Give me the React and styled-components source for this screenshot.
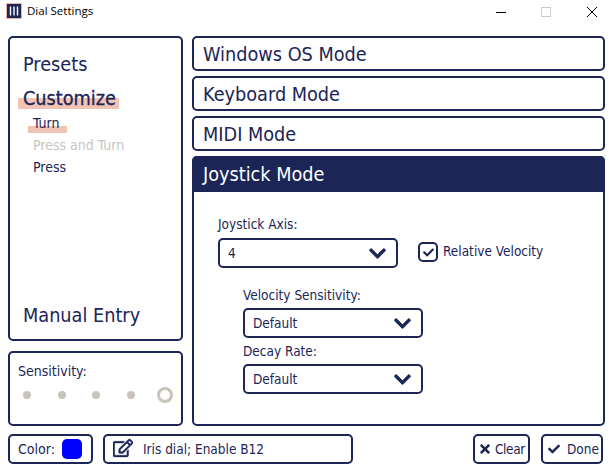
import styled, { createGlobalStyle } from "styled-components";
import { FaCheck, FaChevronDown, FaTimes, FaRegEdit } from "react-icons/fa";

const navy = "#1b2556";

const GlobalStyle = createGlobalStyle`
  * {
    margin: 0;
    padding: 0;
    box-sizing: border-box;
  }
  body {
    background: #fff;
    font-family: "DejaVu Sans Condensed", "DejaVu Sans", sans-serif;
    color: ${navy};
    overflow: hidden;
  }
`;

const Page = styled.div`
  width: 609px;
  height: 472px;
  display: flex;
  flex-direction: column;
`;

const TitleBar = styled.div`
  height: 36px;
  display: flex;
  align-items: flex-start;
  padding: 2px 0 0 6px;
  color: #000;
  font-family: "Open Sans", sans-serif;
  font-size: 11.5px;
`;

const AppIcon = styled.svg`
  width: 16px;
  height: 16px;
  margin-top: 1px;
  flex: none;
`;

const TitleText = styled.span`
  margin-left: 5px;
  line-height: 18px;
`;

const WinButtons = styled.div`
  margin-left: auto;
  display: flex;
  align-items: center;
  height: 16px;
  margin-top: 2px;
`;

const WinIcon = styled.svg`
  width: 46px;
  height: 12px;
  display: block;
`;

const Main = styled.div`
  height: 390px;
  margin-left: 8px;
  width: 597px;
  display: grid;
  grid-template-columns: 175px 413px;
  column-gap: 9px;
`;

const Panel = styled.div`
  border: 2px solid ${navy};
  border-radius: 5px;
`;

const LeftColumn = styled.div`
  display: flex;
  flex-direction: column;
  gap: 10px;
`;

const NavPanel = styled(Panel)`
  height: 305px;
  padding: 13px 0 0 13px;
  display: flex;
  flex-direction: column;
`;

const NavItem = styled.div`
  font-size: 19.7px;
  line-height: 27px;
  margin-bottom: 7px;
`;

const CustomizeMark = styled.span`
  display: inline-block;
  padding: 0 3px 0 5px;
  margin-left: -5px;
  height: 24px;
  line-height: 20px;
  -webkit-text-stroke: 0.3px ${navy};
  background: linear-gradient(transparent 37%, #f0c3b4 37%, #f0c3b4 83%, transparent 83%);
`;

const SubList = styled.div`
  margin-top: -8px;
`;

const SubItem = styled.div`
  font-size: 14px;
  line-height: 22px;
  padding-left: 10px;
  color: ${(p) => (p.$muted ? "#c9c5c0" : navy)};
`;

const TurnMark = styled.span`
  display: inline-block;
  padding: 0 8px 0 5px;
  margin-left: -5px;
  height: 22px;
  background: linear-gradient(transparent 64%, #f0c3b4 64%, #f0c3b4 96%, transparent 96%);
`;

const ManualEntry = styled(NavItem)`
  margin-top: auto;
  margin-bottom: 10px;
`;

const SensitivityPanel = styled(Panel)`
  height: 75px;
  padding: 9px 8px;
`;

const SmallLabel = styled.div`
  font-size: 13.5px;
  line-height: 18px;
`;

const SensitivityLabel = styled(SmallLabel)`
  font-size: 14px;
`;

const Dots = styled.div`
  margin-top: 7px;
  display: flex;
  align-items: center;
  gap: 26.5px;
  padding-left: 5px;
`;

const Dot = styled.span`
  width: 8px;
  height: 8px;
  border-radius: 50%;
  background: #c8c3bb;
`;

const DotActive = styled.span`
  width: 16px;
  height: 16px;
  margin-left: -4px;
  border-radius: 50%;
  border: 3px solid #c8c3bb;
`;

const RightColumn = styled.div`
  display: flex;
  flex-direction: column;
  gap: 5px;
`;

const ModeRow = styled(Panel)`
  height: 35px;
  padding-left: 9px;
  font-size: 19.7px;
  line-height: 33px;
`;

const ModePanel = styled(Panel)`
  height: 270px;
  display: flex;
  flex-direction: column;
`;

const ModeHeader = styled.div`
  height: 36px;
  background: ${navy};
  color: #fff;
  padding-left: 11px;
  font-size: 19.7px;
  line-height: 37px;
  margin: -2px -2px 0;
  border-radius: 5px 5px 0 0;
`;

const ModeBody = styled.div`
  padding: 23px 0 0 24px;
`;

const AxisRow = styled.div`
  display: flex;
  align-items: flex-end;
  gap: 20px;
`;

const Field = styled.div`
  width: 180px;
`;

const Select = styled.div`
  height: 30px;
  margin-top: ${(p) => p.$mt || 5}px;
  width: 180px;
  border: 2px solid ${navy};
  border-radius: 5px;
  padding: 0 9px 0 8px;
  display: flex;
  align-items: center;
  justify-content: space-between;
  font-size: 13.5px;
  svg {
    font-size: 19px;
    stroke: ${navy};
    stroke-width: 14;
  }
`;

const CheckLabel = styled.div`
  display: flex;
  align-items: center;
  gap: 5px;
  font-size: 13.5px;
  margin-bottom: 6px;
`;

const CheckText = styled.span`
  margin-top: -2px;
`;

const CheckBox = styled.span`
  width: 20px;
  height: 20px;
  border: 2px solid ${navy};
  border-radius: 5px;
  display: flex;
  align-items: center;
  justify-content: center;
  font-size: 11px;
`;

const VelocityGroup = styled.div`
  margin: 18px 0 0 25px;
`;

const GroupLabel = styled(SmallLabel)`
  margin-top: ${(p) => (p.$tight ? "4px" : "0")};
`;

const BottomBar = styled.div`
  margin: 8px 0 0 8px;
  width: 597px;
  display: flex;
  gap: 10px;
`;

const Chip = styled(Panel)`
  height: 30px;
  display: flex;
  align-items: center;
  font-size: 13.5px;
`;

const ColorChip = styled(Chip)`
  width: 85px;
  padding-left: 8px;
  gap: 7px;
  font-size: 14px;
`;

const Swatch = styled.span`
  width: 20px;
  height: 20px;
  border-radius: 5px;
  background: #0000ff;
`;

const NameChip = styled(Chip)`
  width: 250px;
  padding-left: 8px;
  gap: 10px;
  svg {
    font-size: 20px;
    margin-top: -3px;
    stroke: ${navy};
    stroke-width: 12;
  }
`;

const ActionButton = styled(Chip)`
  width: ${(p) => p.$w}px;
  padding-left: ${(p) => p.$pad}px;
  gap: ${(p) => p.$gap}px;
  margin-left: ${(p) => p.$ml || 0}px;
  letter-spacing: ${(p) => p.$track || 0}px;
  svg {
    font-size: ${(p) => p.$icon}px;
  }
`;

export default function App() {
  return (
    <>
      <GlobalStyle />
      <Page>
        <TitleBar>
          <AppIcon viewBox="0 0 16 16">
            <rect x="0.5" y="0.5" width="15" height="15" fill="#1b2556" stroke="#e8b9a8" />
            <path d="M4.5 3.5v9M8 3.5v9M11.5 3.5v9" stroke="#fff" strokeWidth="1.4" />
          </AppIcon>
          <TitleText>Dial Settings</TitleText>
          <WinButtons>
            <WinIcon viewBox="0 0 46 12">
              <path d="M25 6.5h10" stroke="#000" />
            </WinIcon>
            <WinIcon viewBox="0 0 46 12">
              <rect x="24.5" y="1.5" width="9" height="9" fill="none" stroke="#ccc" />
            </WinIcon>
            <WinIcon viewBox="0 0 46 12">
              <path d="M24 1l10 10M34 1L24 11" stroke="#000" />
            </WinIcon>
          </WinButtons>
        </TitleBar>
        <Main>
          <LeftColumn>
            <NavPanel>
              <NavItem>Presets</NavItem>
              <NavItem>
                <CustomizeMark>Customize</CustomizeMark>
              </NavItem>
              <SubList>
                <SubItem>
                  <TurnMark>Turn</TurnMark>
                </SubItem>
                <SubItem $muted>Press and Turn</SubItem>
                <SubItem>Press</SubItem>
              </SubList>
              <ManualEntry>Manual Entry</ManualEntry>
            </NavPanel>
            <SensitivityPanel>
              <SensitivityLabel>Sensitivity:</SensitivityLabel>
              <Dots>
                <Dot />
                <Dot />
                <Dot />
                <Dot />
                <DotActive />
              </Dots>
            </SensitivityPanel>
          </LeftColumn>
          <RightColumn>
            <ModeRow>Windows OS Mode</ModeRow>
            <ModeRow>Keyboard Mode</ModeRow>
            <ModeRow>MIDI Mode</ModeRow>
            <ModePanel>
              <ModeHeader>Joystick Mode</ModeHeader>
              <ModeBody>
                <AxisRow>
                  <Field>
                    <SmallLabel>Joystick Axis:</SmallLabel>
                    <Select>
                      4
                      <FaChevronDown />
                    </Select>
                  </Field>
                  <CheckLabel>
                    <CheckBox>
                      <FaCheck />
                    </CheckBox>
                    <CheckText>Relative Velocity</CheckText>
                  </CheckLabel>
                </AxisRow>
                <VelocityGroup>
                  <GroupLabel>Velocity Sensitivity:</GroupLabel>
                  <Select $mt={4}>
                    Default
                    <FaChevronDown />
                  </Select>
                  <GroupLabel $tight>Decay Rate:</GroupLabel>
                  <Select $mt={4}>
                    Default
                    <FaChevronDown />
                  </Select>
                </VelocityGroup>
              </ModeBody>
            </ModePanel>
          </RightColumn>
        </Main>
        <BottomBar>
          <ColorChip>
            Color:
            <Swatch />
          </ColorChip>
          <NameChip>
            <FaRegEdit />
            Iris dial; Enable B12
          </NameChip>
          <ActionButton $w={57} $ml={110} $pad={3} $gap={3} $icon={14} $track={-0.4}>
            <FaTimes />
            Clear
          </ActionButton>
          <ActionButton $w={62} $ml={1} $pad={5} $gap={7} $icon={12}>
            <FaCheck />
            Done
          </ActionButton>
        </BottomBar>
      </Page>
    </>
  );
}
